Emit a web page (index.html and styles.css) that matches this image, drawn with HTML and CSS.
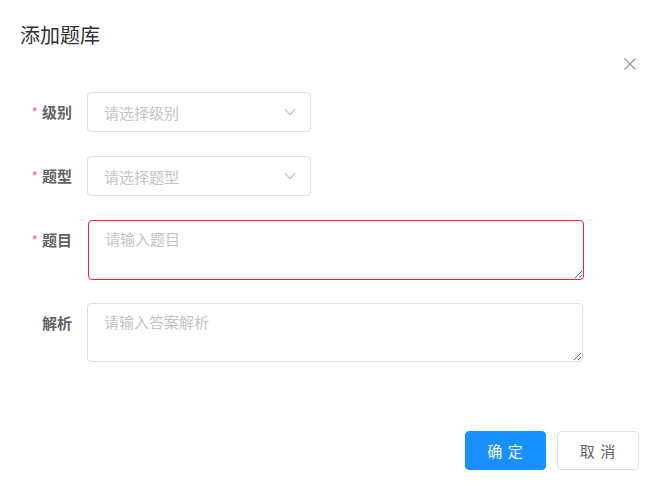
FILE: index.html
```html
<!DOCTYPE html>
<html lang="zh-CN">
<head>
<meta charset="utf-8">
<title>添加题库</title>
<link rel="stylesheet" href="styles.css">
</head>
<body>
<div class="dialog">
  <div class="header">
    <span class="title">添加题库</span>
    <button class="close" aria-label="关闭">
      <svg width="12" height="12" viewBox="0 0 12 12"><path d="M0.5 0.5 L11.5 11.5 M11.5 0.5 L0.5 11.5" stroke="#909399" stroke-width="1.2" fill="none"/></svg>
    </button>
  </div>
  <form class="form">
    <div class="row">
      <label class="label"><span class="req">*</span>级别</label>
      <div class="select">
        <span class="ph">请选择级别</span>
        <svg class="arrow" width="12" height="8" viewBox="0 0 12 8"><path d="M0.8 1.2 L6 6.4 L11.2 1.2" stroke="#c0c4cc" stroke-width="1.2" fill="none"/></svg>
      </div>
    </div>
    <div class="row">
      <label class="label"><span class="req">*</span>题型</label>
      <div class="select">
        <span class="ph">请选择题型</span>
        <svg class="arrow" width="12" height="8" viewBox="0 0 12 8"><path d="M0.8 1.2 L6 6.4 L11.2 1.2" stroke="#c0c4cc" stroke-width="1.2" fill="none"/></svg>
      </div>
    </div>
    <div class="row row-tight">
      <label class="label"><span class="req">*</span>题目</label>
      <textarea class="textarea error" placeholder="请输入题目"></textarea>
    </div>
    <div class="row">
      <label class="label">解析</label>
      <textarea class="textarea short" placeholder="请输入答案解析"></textarea>
    </div>
  </form>
  <div class="footer">
    <button class="btn primary" type="button">确 定</button>
    <button class="btn" type="button">取 消</button>
  </div>
</div>
</body>
</html>
```
FILE: styles.css
```css
* { box-sizing: border-box; }
html, body {
  margin: 0;
  padding: 0;
  background: #fff;
  font-family: "Noto Sans CJK SC", "Noto Sans", sans-serif;
  color: #606266;
}
.dialog {
  position: relative;
  width: 656px;
  height: 486px;
}
.header {
  padding: 22px 20px 0;
  height: 48px;
}
.title {
  font-size: 20px;
  line-height: 26px;
  color: #303133;
}
.close {
  position: absolute;
  top: 58px;
  right: 20px;
  width: 12px;
  height: 12px;
  padding: 0;
  border: 0;
  background: none;
  display: flex;
}
.form {
  margin-top: 44px;
}
.row {
  display: flex;
  align-items: flex-start;
  margin-bottom: 24px;
}
.row.row-tight { margin-bottom: 23px; }
.row:last-child { margin-bottom: 0; }
.label {
  width: 87px;
  padding-right: 15px;
  text-align: right;
  font-size: 15px;
  font-weight: bold;
  line-height: 40px;
  color: #606266;
}
.req {
  color: #f56c6c;
  margin-right: 4px;
  font-weight: normal;
  font-size: 14px;
}
.select {
  width: 224px;
  height: 40px;
  border: 1px solid #dcdfe6;
  border-radius: 4px;
  display: flex;
  align-items: center;
  justify-content: space-between;
  padding: 0 14px 0 16px;
}
.ph {
  font-size: 15px;
  color: #c0c4cc;
}
.textarea {
  width: 496px;
  height: 60px;
  border: 1px solid #dcdfe6;
  border-radius: 4px;
  padding: 7px 16px;
  font-family: inherit;
  font-size: 15px;
  line-height: 1.5;
  color: #606266;
  resize: vertical;
  outline: none;
  margin: 0;
  display: block;
}
.textarea.short { height: 59px; }
.textarea::placeholder { color: #c0c4cc; }
.textarea.error { border-color: #f5222d; margin-left: 1px; }
.footer {
  display: flex;
  justify-content: flex-end;
  gap: 11px;
  padding: 0 17px 0 0;
  margin-top: 69px;
}
.btn {
  width: 82px;
  height: 39px;
  border: 1px solid #dcdfe6;
  border-radius: 4px;
  background: #fff;
  color: #606266;
  font-family: inherit;
  font-size: 15px;
  letter-spacing: 1px;
  padding: 0;
}
.btn.primary {
  width: 81px;
  background: #1890ff;
  border-color: #1890ff;
  color: #fff;
}
```
